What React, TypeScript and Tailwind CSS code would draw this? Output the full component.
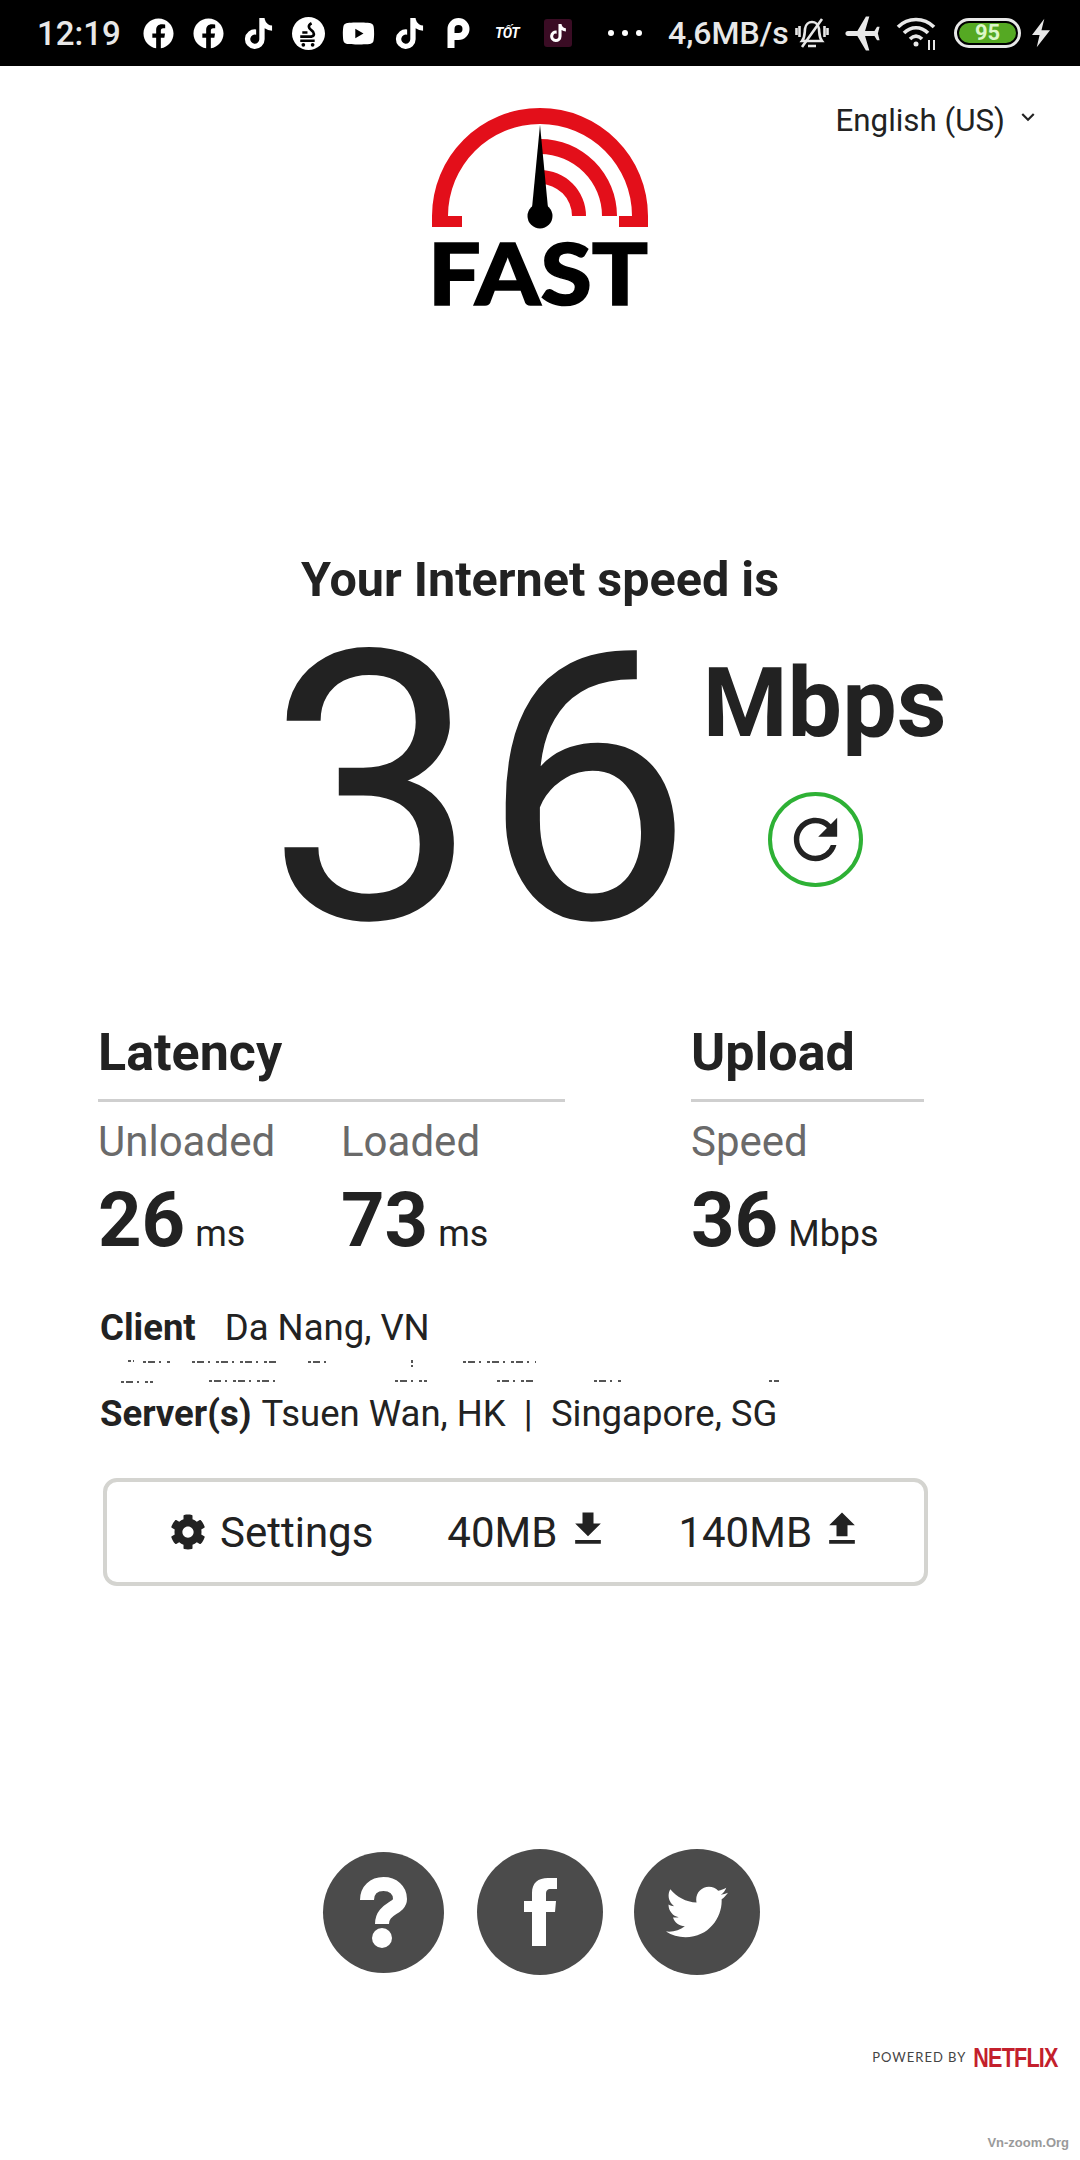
import React from "react";
import { FaFacebook, FaTiktok, FaYoutube, FaCog, FaTwitter } from "react-icons/fa";
import { MdFileDownload, MdFileUpload, MdRefresh, MdAirplanemodeActive, MdKeyboardArrowDown } from "react-icons/md";

const ROBOTO = "font-['Roboto',sans-serif]";

const FastLogo = () => (
  <svg width="216" height="197" viewBox="432 108 216 197" className="block overflow-visible">
    <path d="M432 227V216A108 108 0 0 1 648 216V227H619V216H632A92 92 0 0 0 448 216H462V227Z" fill="#e30f1a" />
    <path d="M540 139A77 77 0 0 1 617 216H602A62 62 0 0 0 540 154Z" fill="#e30f1a" />
    <path d="M540 170A46 46 0 0 1 586 216H572A32 32 0 0 0 540 184Z" fill="#e30f1a" />
    <path d="M540 125L548 208H532Z" fill="#000" />
    <circle cx="540" cy="216" r="12.5" fill="#000" />
    <text x="428" y="304.500" textLength="220" lengthAdjust="spacingAndGlyphs" fontFamily="Lato, sans-serif" fontWeight="900" fontSize="86" fill="#000" stroke="#000" strokeWidth="1.5">
      FAST
    </text>
  </svg>
);

const StatusBar = () => (
  <div className={`${ROBOTO} flex h-[66px] items-center bg-black pl-[37px] text-[#e8e8e8]`}>
    <span className="w-[85px] text-[33px] font-medium leading-none">12:19</span>
    <FaFacebook className="ml-[21px] text-[31px] text-white" />
    <FaFacebook className="ml-[19px] text-[31px] text-white" />
    <FaTiktok className="ml-[19px] text-[31px] text-white" />
    <svg width="33" height="33" viewBox="0 0 32 32" className="ml-[18px]">
      <circle cx="16" cy="16" r="16" fill="#fff" />
      <path d="M19 6C15 8 16 11 19 13C22 15 22 18 19 19H8M8 23H22M10 15H15" stroke="#000" strokeWidth="2.6" fill="none" />
      <circle cx="11" cy="27" r="1.8" fill="#000" />
      <circle cx="20" cy="27" r="1.8" fill="#000" />
    </svg>
    <FaYoutube className="ml-[17px] text-[33px] text-white" />
    <FaTiktok className="ml-[19px] text-[31px] text-white" />
    <svg width="23" height="30" viewBox="0 0 22 30" className="ml-[22px]">
      <path d="M0 30V11A11 11 0 1 1 11 22H7V15H11A4 4 0 1 0 7 11V30Z" fill="#fff" />
    </svg>
    <span className="ml-[25px] w-[28px] text-[14px] font-bold italic leading-none tracking-[-0.5px] text-white">TỐT</span>
    <span className="ml-[21px] flex h-[28px] w-[28px] items-center justify-center rounded-[3px] bg-[#3a0c24]">
      <FaTiktok className="text-[18px] text-white" />
    </span>
    <span className="ml-[36px] flex w-[34px] justify-between">
      <i className="h-[6px] w-[6px] rounded-full bg-white" />
      <i className="h-[6px] w-[6px] rounded-full bg-white" />
      <i className="h-[6px] w-[6px] rounded-full bg-white" />
    </span>
    <span className="ml-[26px] w-[120px] whitespace-nowrap text-[32px] font-medium leading-none">4,6MB/s</span>
    <svg width="34" height="34" viewBox="0 0 34 34" className="ml-[7px]" fill="none" stroke="#e8e8e8" strokeWidth="2.6">
      <path d="M7 25H27C24 21 24.500 18 24 13C23.500 8 20 6 17 6C14 6 10.500 8 10 13C9.500 18 10 21 7 25Z" />
      <path d="M13 30H21M27 3L7 31M1.500 12V19M4.500 10V21M29.500 10V21M32.500 12V19" />
    </svg>
    <MdAirplanemodeActive className="ml-[13px] -rotate-90 text-[41px] text-[#e8e8e8]" />
    <svg width="42" height="34" viewBox="0 0 42 34" className="ml-[13px]" fill="none" stroke="#e8e8e8" strokeWidth="3.6">
      <path d="M2 11C12 1 28 1 38 11M8 17C15 10 25 10 32 17M14 23C18 19 22 19 26 23" />
      <circle cx="20" cy="28" r="2.500" fill="#e8e8e8" stroke="none" />
      <path d="M33 34V24M38 34V24" strokeWidth="2" />
    </svg>
    <span className="ml-[16px] flex h-[30px] w-[67px] items-center justify-center rounded-full border-[3px] border-[#e8e8e8] p-[2px]">
      <span className="flex h-full w-full items-center justify-center rounded-full bg-[#55a923] text-[22px] font-bold leading-none text-[#dcf7c8]">95</span>
    </span>
    <svg width="18" height="30" viewBox="0 0 19 30" className="ml-[11px]">
      <path d="M13 0L0 17H8L5 30L19 12H10Z" fill="#e8e8e8" />
    </svg>
  </div>
);

const Metric = ({ label, value, unit, className }: { label: string; value: string; unit: string; className: string }) => (
  <div className={className}>
    <div className="text-[42px] leading-[48px] text-[#6a6a6a]">{label}</div>
    <div className="mt-[10px] flex items-baseline text-[#222]">
      <span className="text-[76px] font-bold leading-[88px]">{value}</span>
      <span className="ml-[10px] text-[36px]">{unit}</span>
    </div>
  </div>
);

export default function App() {
  return (
    <div className={`${ROBOTO} flex h-[2160px] w-[1080px] flex-col overflow-hidden bg-white text-[#222]`}>
      <StatusBar />

      <header className="grid grid-cols-[432px_216px_1fr] pt-[42px]">
        <div />
        <FastLogo />
        <div className="mt-[-6px] flex items-start justify-end pr-[39px]">
          <span className="whitespace-nowrap text-[31.3px] leading-[38px]">English (US)</span>
          <MdKeyboardArrowDown className="ml-[10px] mt-[2px] text-[26px]" />
        </div>
      </header>

      <h1 className="mt-[247px] text-center text-[48.5px] font-bold leading-[56px]">Your Internet speed is</h1>

      <section className="ml-[267px] mt-[18px] flex h-[320px] items-start">
        <span className="mt-[-24px] block text-[376px] leading-[376px] tracking-[3px]">36</span>
        <div className="ml-[7px] mt-[27px] flex flex-col items-center">
          <span className="text-[97px] font-bold leading-[100px]">Mbps</span>
          <button className="mr-[18px] mt-[39px] flex h-[95px] w-[95px] items-center justify-center rounded-full border-[4px] border-[#2eb135]">
            <MdRefresh className="text-[65px] text-[#222]" />
          </button>
        </div>
      </section>

      <section className="ml-[98px] mt-[77px] flex">
        <div className="w-[467px]">
          <h2 className="border-b-[3px] border-[#cfcfcf] pb-[16px] text-[52px] font-bold leading-[60px]">Latency</h2>
          <div className="mt-[16px] flex">
            <Metric label="Unloaded" value="26" unit="ms" className="w-[243px]" />
            <Metric label="Loaded" value="73" unit="ms" className="" />
          </div>
        </div>
        <div className="ml-[126px] w-[233px]">
          <h2 className="border-b-[3px] border-[#cfcfcf] pb-[16px] text-[52px] font-bold leading-[60px]">Upload</h2>
          <Metric label="Speed" value="36" unit="Mbps" className="mt-[16px] whitespace-nowrap" />
        </div>
      </section>

      <section className="ml-[100px] mt-[42px] text-[36.5px] leading-[44px]">
        <div>
          <b className="mr-[29px] font-bold">Client</b>Da Nang, VN
        </div>
        {/* remains of a line scrubbed out of the screenshot */}
        <svg width="680" height="25" viewBox="0 0 680 25" className="mt-[8px] block" stroke="#555" strokeWidth="2" strokeDasharray="3 2 7 4 2 6">
          <path d="M28 3H34M43 4H72M92 4H179M208 4H232M312 2V9M363 4H436M21 24H53M109 23H177M295 23H327M397 23H436M494 23H523M669 23H679" />
        </svg>
        <div className="mt-[9px]">
          <b className="mr-[10px] font-bold">Server(s)</b>Tsuen Wan, HK&nbsp; |&nbsp; Singapore, SG
        </div>
      </section>

      <section className="ml-[103px] mt-[42px] flex h-[108px] w-[825px] items-center rounded-[14px] border-[4px] border-[#d4d4d0] pl-[63px] text-[42px]">
        <FaCog className="text-[36px]" />
        <span className="ml-[14px]">Settings</span>
        <span className="ml-[74px]">40MB</span>
        <MdFileDownload className="mb-[6px] ml-[9px] text-[44px]" />
        <span className="ml-[68px]">140MB</span>
        <MdFileUpload className="mb-[6px] ml-[8px] text-[44px]" />
      </section>

      <section className="ml-[323px] mt-[263px] flex items-center">
        <a className="flex h-[121px] w-[121px] items-center justify-center rounded-full bg-[#4b4b4b]">
          <svg width="47" height="71" viewBox="0 0 47 71" fill="none">
            <path d="M7 23C7 13 14 7 23.500 7C33 7 40 13 40 22C40 32 22 31 22 47" stroke="#fff" strokeWidth="14" />
            <circle cx="22" cy="61" r="10" fill="#fff" />
          </svg>
        </a>
        <a className="ml-[33px] flex h-[126px] w-[126px] items-center justify-center rounded-full bg-[#4b4b4b]">
          <svg width="33" height="68" viewBox="0 0 33 68">
            <path d="M8 68V34H0V23H8V15C8 5 14 0 24 0H33V11H27C23 11 22 13 22 16V23H32L31 34H22V68Z" fill="#fff" />
          </svg>
        </a>
        <a className="ml-[31px] flex h-[126px] w-[126px] items-center justify-center rounded-full bg-[#4b4b4b] text-[62px] text-white">
          <FaTwitter />
        </a>
      </section>

      <footer className="mt-[71px] flex h-[24px] items-center justify-end pr-[22px]">
        <span className="font-['Lato',sans-serif] text-[13px] tracking-[1px] text-[#444]">POWERED BY</span>
        <span className="ml-[-18px] origin-right scale-x-[0.77] font-['Liberation_Sans',sans-serif] text-[28px] font-bold leading-[24px] tracking-[-1px] text-[#c3202c]">NETFLIX</span>
      </footer>
      <div className="mt-[64px] pr-[11px] text-right font-['Liberation_Sans',sans-serif] text-[13px] font-bold leading-[18px] text-[#9a9a9a]">Vn-zoom.Org</div>
    </div>
  );
}
